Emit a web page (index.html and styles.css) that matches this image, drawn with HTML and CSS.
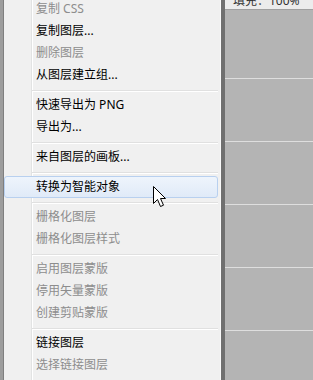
FILE: index.html
```html
<!DOCTYPE html>
<html>
<head>
  <meta charset="UTF-8">
  <link rel="stylesheet" href="styles.css">
</head>
<body>
  <div class="screen">
    <div class="edge"></div>
    <div class="menu">
      <ul class="items">
        <li class="item off">复制 CSS</li>
        <li class="item">复制图层...</li>
        <li class="item off">删除图层</li>
        <li class="item">从图层建立组...</li>
        <li class="sep"></li>
        <li class="item">快速导出为 PNG</li>
        <li class="item">导出为...</li>
        <li class="sep"></li>
        <li class="item">来自图层的画板...</li>
        <li class="sep"></li>
        <li class="item hot">转换为智能对象</li>
        <li class="sep"></li>
        <li class="item off">栅格化图层</li>
        <li class="item off">栅格化图层样式</li>
        <li class="sep"></li>
        <li class="item off">启用图层蒙版</li>
        <li class="item off">停用矢量蒙版</li>
        <li class="item off">创建剪贴蒙版</li>
        <li class="sep"></li>
        <li class="item">链接图层</li>
        <li class="item off">选择链接图层</li>
      </ul>
    </div>
    <div class="shade"></div>
    <div class="layers">
      <div class="opts"><span>填充：100%</span></div>
      <div class="row first"></div>
      <div class="row"></div>
      <div class="row"></div>
      <div class="row"></div>
      <div class="row"></div>
      <div class="row"></div>
    </div>
    <svg class="cursor" width="14" height="22" viewBox="0 0 14 22">
      <path d="M0.5 0.5 V17.5 L4.5 13.5 L7.5 20.5 L10.5 19.2 L7.5 12.5 H12.5 Z" fill="#fff" stroke="#000" stroke-width="1" stroke-linejoin="miter"/>
    </svg>
  </div>
</body>
</html>
```

FILE: styles.css
```css
html, body { margin: 0; padding: 0; }
body { width: 313px; height: 380px; overflow: hidden; background: #b4b4b4; font-family: "Noto Sans", "Noto Sans CJK SC", sans-serif; font-size: 12px; }
.screen { position: relative; display: flex; height: 380px; }
.edge { width: 3px; background: #9d9d9d; border-right: 1px solid #7f7f7f; flex: none; }
.menu { width: 214px; flex: none; background: linear-gradient(to right, #f0f0f0 27px, #e2e3e3 27px 28px, #fff 28px 29px, #f0f0f0 29px); border-right: 1px solid #fafafa; padding-right: 2px; }
.items { list-style: none; margin: -2px 0 0; padding: 0; }
.item { height: 22px; line-height: 22px; padding-left: 32px; color: #000; white-space: nowrap; }
.item.off { color: #8d8d8d; }
.item.hot { box-sizing: border-box; line-height: 20px; padding-left: 31px; border: 1px solid #b8d0ef; border-radius: 3px; background: linear-gradient(#eef4fc, #e0eaf8); }
.sep { height: 8px; margin-left: 28px; background: linear-gradient(to bottom, transparent 4px, #e0e0e0 4px 5px, #fff 5px 6px, transparent 6px); }
.shade { width: 4px; flex: none; background: #707070; }
.layers { flex: 1; background: #b4b4b4; }
.opts { height: 9px; overflow: hidden; background: #ececec; border-bottom: 1px solid #a0a0a0; padding-left: 8px; color: #333; }
.opts span { display: block; line-height: 12px; margin-top: -5px; }
.row { height: 62px; border-bottom: 1px solid #dedede; }
.row.first { height: 68px; }
.cursor { position: absolute; left: 153px; top: 186px; }
```
